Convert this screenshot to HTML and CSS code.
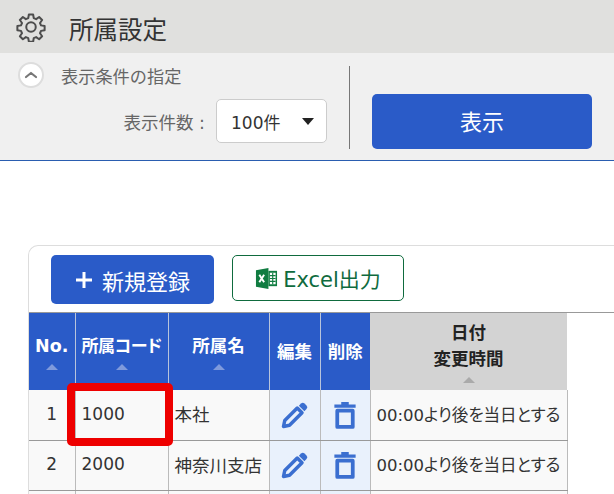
FILE: index.html
```html
<!DOCTYPE html>
<html lang="ja">
<head>
    <meta charset="UTF-8">
    <title>所属設定</title>
    <link rel="stylesheet" href="styles.css">
</head>
<body>
    <header class="title-bar">
        <svg class="gear" viewBox="0 0 24 24" width="30" height="30" fill="none" stroke="#4d4d4d" stroke-width="1.600" stroke-linejoin="round">
            <path d="M10.300 2h3.400l.5 2.900 1.900.8 2.400-1.700 2.400 2.400-1.700 2.400.8 1.900 2.900.5v3.400l-2.900.5-.8 1.900 1.700 2.400-2.400 2.400-2.400-1.700-1.900.8-.5 2.900h-3.400l-.5-2.900-1.900-.8-2.400 1.700-2.400-2.400 1.700-2.400-.8-1.900-2.900-.5v-3.400l2.900-.5.8-1.900-1.700-2.400 2.400-2.400 2.400 1.700 1.900-.8z"/>
            <circle cx="12" cy="12" r="3.800"/>
        </svg>
        <h1>所属設定</h1>
    </header>

    <section class="filter">
        <div class="filter-left">
            <div class="filter-head">
                <span class="toggle">
                    <svg viewBox="0 0 16 16" width="16" height="16" fill="none" stroke="#777" stroke-width="2.200" stroke-linecap="round" stroke-linejoin="round"><path d="M3 10l5-4 5 4"/></svg>
                </span>
                <span>表示条件の指定</span>
            </div>
            <div class="filter-row">
                <label>表示件数 :</label>
                <div class="select">100件<i class="caret"></i></div>
            </div>
        </div>
        <div class="divider"></div>
        <button class="show-btn">表示</button>
    </section>

    <section class="card">
        <div class="toolbar">
            <button class="new-btn">
                <svg class="plus" viewBox="0 0 18 18" width="18" height="18"><path stroke="#fff" stroke-width="3" d="M9 1v16M1 9h16"/></svg>
                新規登録
            </button>
            <button class="excel-btn">
                <svg viewBox="0 0 24 24" width="23" height="23">
                    <path fill="#107c41" d="M1 3.500L14 1v22L1 20.500z"/>
                    <path fill="#107c41" d="M14 4h9v16h-9z"/>
                    <path fill="#fff" d="M15.500 6h6v12h-6z"/>
                    <path stroke="#107c41" stroke-width="1.200" d="M15.500 9h6M15.500 12h6M15.500 15h6M18.500 6v12"/>
                    <path stroke="#fff" stroke-width="2" fill="none" d="M4.500 8l5 8M9.500 8l-5 8"/>
                </svg>
                Excel出力
            </button>
        </div>

        <table>
            <thead>
                <tr>
                    <th class="c-no">No.<i class="sort"></i></th>
                    <th class="c-code">所属コード<i class="sort"></i></th>
                    <th class="c-name">所属名<i class="sort"></i></th>
                    <th class="c-edit">編集</th>
                    <th class="c-del">削除</th>
                    <th class="c-date">日付<br>変更時間<i class="sort"></i></th>
                </tr>
            </thead>
            <tbody>
                <tr>
                    <td class="num">1</td>
                    <td class="code">1000</td>
                    <td>本社</td>
                    <td class="act"><svg class="ico" viewBox="0 0 24 24" width="30" height="30"><use href="#pen"/></svg></td>
                    <td class="act"><svg class="ico" viewBox="0 0 24 24" width="30" height="30"><use href="#trash"/></svg></td>
                    <td class="note">00:00より後を当日とする</td>
                </tr>
                <tr>
                    <td class="num">2</td>
                    <td class="code">2000</td>
                    <td>神奈川支店</td>
                    <td class="act"><svg class="ico" viewBox="0 0 24 24" width="30" height="30"><use href="#pen"/></svg></td>
                    <td class="act"><svg class="ico" viewBox="0 0 24 24" width="30" height="30"><use href="#trash"/></svg></td>
                    <td class="note">00:00より後を当日とする</td>
                </tr>
                <tr>
                    <td class="num"></td>
                    <td></td>
                    <td></td>
                    <td class="act"></td>
                    <td class="act"></td>
                    <td></td>
                </tr>
            </tbody>
        </table>
    </section>

    <div class="highlight"></div>

    <svg width="0" height="0" class="defs">
        <symbol id="pen" viewBox="0 0 24 24">
            <path fill="#3b6fd0" d="M16.800 2.800a2 2 0 0 1 2.800 0l1.600 1.600a2 2 0 0 1 0 2.800l-1.700 1.700-4.400-4.400z"/>
            <path fill="none" stroke="#3b6fd0" stroke-width="2.800" stroke-linejoin="round" d="M13.800 6.400l3.800 3.800L7.600 20.200l-4.800 1 1-4.800z"/>
        </symbol>
        <symbol id="trash" viewBox="0 0 24 24">
            <path fill="#3b6fd0" d="M3.500 3.500h17v2.600h-17zM9 1.500h6v2.500H9z"/>
            <path fill="none" stroke="#3b6fd0" stroke-width="3" stroke-linejoin="round" d="M5.800 8.500h12.400v13H5.800z"/>
        </symbol>
    </svg>
</body>
</html>
```

FILE: styles.css
```css
* {
    box-sizing: border-box;
}

html, body {
    height: 494px;
    overflow: hidden;
}

body {
    margin: 0;
    position: relative;
    background: #fff;
    color: #333;
    font-family: "DejaVu Sans", "Noto Sans CJK JP", sans-serif;
}

.title-bar {
    height: 53px;
    background: #e0e0de;
    display: flex;
    align-items: center;
    padding-left: 16px;
}

.title-bar h1 {
    margin: 3px 0 0 23px;
    font-size: 24.500px;
    font-weight: 400;
    color: #333;
}

.filter {
    height: 108px;
    background: #f0f0f0;
    border-bottom: 1px solid #2a5db0;
    display: flex;
}

.filter-left {
    width: 349px;
    flex: none;
    padding: 9px 22px 0 18px;
}

.filter-head {
    display: flex;
    align-items: center;
    font-size: 17.200px;
    color: #666;
    height: 26px;
}

.toggle {
    width: 26px;
    height: 26px;
    border-radius: 50%;
    background: #fff;
    border: 2px solid #ddd;
    margin-right: 17px;
    display: flex;
    align-items: center;
    justify-content: center;
}

.filter-row {
    display: flex;
    align-items: center;
    justify-content: flex-end;
    margin-top: 11px;
    font-size: 17.500px;
    color: #666;
}

.filter-row label {
    margin-right: 11px;
}

.select {
    width: 111px;
    height: 44px;
    background: #fff;
    border: 1px solid #ccc;
    border-radius: 5px;
    padding-left: 14px;
    display: flex;
    align-items: center;
    justify-content: space-between;
    font-size: 17px;
    color: #333;
}

.caret {
    width: 0;
    height: 0;
    margin-right: 12px;
    border-left: 6px solid transparent;
    border-right: 6px solid transparent;
    border-top: 7px solid #222;
}

.divider {
    width: 1px;
    height: 83px;
    margin-top: 13px;
    background: #777;
    flex: none;
}

.show-btn {
    width: 220px;
    height: 55px;
    margin: 41px 0 0 22px;
    padding: 0 0 4px;
    background: #2a5bc8;
    border: 0;
    border-radius: 5px;
    color: #fff;
    font: inherit;
    font-size: 22px;
}

.card {
    margin: 84px 0 0 28px;
    border: 1px solid #ddd;
    border-right: 0;
    border-bottom: 0;
    border-top-left-radius: 10px;
    padding-top: 9px;
    overflow: hidden;
}

.toolbar {
    display: flex;
    align-items: flex-start;
    padding-left: 22px;
    height: 58px;
    border-bottom: 1px solid #999;
}

.new-btn {
    width: 163px;
    height: 49px;
    background: #2a5bc8;
    border: 0;
    border-radius: 5px;
    color: #fff;
    font: inherit;
    font-size: 22px;
    display: flex;
    align-items: center;
    justify-content: center;
    padding: 0;
}

.plus {
    margin-right: 9px;
}

.excel-btn {
    width: 172px;
    height: 46px;
    margin-left: 18px;
    background: #fff;
    border: 1px solid #0f6b3e;
    border-radius: 5px;
    color: #0f6b3e;
    font: inherit;
    font-size: 21px;
    display: flex;
    align-items: center;
    justify-content: center;
    gap: 5px;
    padding: 0;
}

table {
    border-collapse: collapse;
    table-layout: fixed;
    width: 538px;
}

th {
    height: 77px;
    background: #2a5bc8;
    color: #fff;
    font-size: 17.500px;
    font-weight: 700;
    text-align: center;
    vertical-align: middle;
    border-left: 1px solid #b8c4dc;
    line-height: 26px;
    padding: 0;
    font-feature-settings: "palt";
}

th:first-child {
    border-left: 0;
}

th.c-code {
    font-size: 17px;
    letter-spacing: -.4px;
}

.sort {
    display: block;
    width: 0;
    height: 0;
    margin: 5px auto 0;
    border-left: 6px solid transparent;
    border-right: 6px solid transparent;
    border-bottom: 6px solid #7f9adc;
}

th.c-date {
    background: #d3d3d3;
    color: #222;
    border-left: 0;
}

.c-date .sort {
    border-bottom-color: #aaa;
}

.c-no { width: 46px; }
.c-code { width: 93px; }
.c-name { width: 101px; }
.c-edit { width: 51px; }
.c-del { width: 50px; }
.c-date { width: 197px; }

td {
    height: 50px;
    padding: 0 0 2px 6px;
    border: 1px solid #bbb;
    border-top: 0;
    border-bottom: 1px solid #999;
    background: #f9f9f9;
    white-space: nowrap;
    font-size: 17.500px;
}

td:first-child {
    border-left: 0;
}

.code {
    font-size: 17px;
}

.note {
    font-size: 16.500px;
    font-feature-settings: "palt";
}

.num {
    padding: 0 0 2px;
    text-align: center;
    font-size: 17px;
}

.act {
    padding: 0;
    background: #e9f1fc;
    text-align: center;
}

.ico {
    display: block;
    margin: 0 auto;
}

.defs {
    position: absolute;
}

.highlight {
    position: absolute;
    left: 67px;
    top: 383px;
    width: 106px;
    height: 63px;
    border: 8px solid #ee0000;
    border-radius: 5px;
}
```
